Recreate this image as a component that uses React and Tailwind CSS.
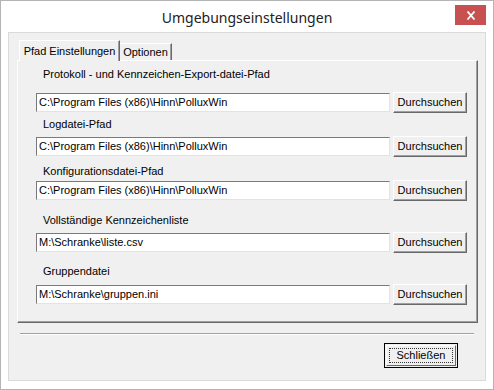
import React from 'react'

const font = { fontFamily: '"Liberation Sans", Arial, sans-serif' }

// sunken edit box
function PathField({ value }) {
  return (
    <div className="w-[354px] h-[19px] bg-white border-t border-l border-t-[#7a7a7a] border-l-[#7a7a7a] border-r border-b border-r-[#e3e3e3] border-b-[#e3e3e3] flex items-center pl-[2px] text-[11px] text-black leading-none overflow-hidden whitespace-nowrap">
      {value}
    </div>
  )
}

// raised push button
function WinButton({ children, w = 'w-[74px]' }) {
  return (
    <div className={`${w} h-[21px] bg-[#f0f0f0] border border-t-white border-l-white border-r-[#696969] border-b-[#696969] shadow-[inset_-1px_-1px_0_#a0a0a0] flex items-center justify-center text-[11px] text-black leading-none`}>
      {children}
    </div>
  )
}

function PathRow({ label, value, labelGap, fieldGap }) {
  return (
    <div className={labelGap}>
      <div className="pl-[7px] h-[13px] text-[11px] leading-[13px] text-black">{label}</div>
      <div className={`flex items-center gap-[3px] ${fieldGap}`}>
        <PathField value={value} />
        <WinButton>Durchsuchen</WinButton>
      </div>
    </div>
  )
}

export default function App() {
  const rows = [
    { label: 'Protokoll - und Kennzeichen-Export-datei-Pfad', value: 'C:\\Program Files (x86)\\Hinn\\PolluxWin', labelGap: 'mt-[7px]', fieldGap: 'mt-[11px]' },
    { label: 'Logdatei-Pfad', value: 'C:\\Program Files (x86)\\Hinn\\PolluxWin', labelGap: 'mt-[5px]', fieldGap: 'mt-[5px]' },
    { label: 'Konfigurationsdatei-Pfad', value: 'C:\\Program Files (x86)\\Hinn\\PolluxWin', labelGap: 'mt-[8px]', fieldGap: 'mt-[2px]' },
    { label: 'Vollständige Kennzeichenliste', value: 'M:\\Schranke\\liste.csv', labelGap: 'mt-[13px]', fieldGap: 'mt-[5px]' },
    { label: 'Gruppendatei', value: 'M:\\Schranke\\gruppen.ini', labelGap: 'mt-[12px]', fieldGap: 'mt-[6px]' },
  ]

  return (
    <div className="w-[494px] h-[390px] bg-white border border-[#b4b4b4] relative" style={font}>
      {/* title bar */}
      <div className="h-[31px] flex items-center justify-center">
        <span className="text-[14px] text-[#222] pt-[2px]" style={{ fontFamily: '"Noto Sans", "Open Sans", sans-serif' }}>
          Umgebungseinstellungen
        </span>
      </div>
      <div className="absolute top-[4px] right-[7px] w-[31px] h-[20px] bg-[#c75050] flex items-center justify-center">
        <svg width="10" height="9" viewBox="0 0 10 9">
          <path d="M1.5 0.5 L8.5 8.5 M8.5 0.5 L1.5 8.5" stroke="white" strokeWidth="1.8" />
        </svg>
      </div>

      {/* client area */}
      <div className="mx-[7px] h-[349px] bg-[#f0f0f0] border border-[#dadada] px-[8px]">
        {/* tabs */}
        <div className="mt-[7px] flex items-end pl-[2px] h-[21px] relative z-10">
          <div className="w-[101px] h-[21px] bg-[#f0f0f0] border-t border-l border-t-white border-l-white border-r border-r-[#696969] shadow-[inset_-1px_0_0_#a0a0a0] flex items-center justify-center text-[11px] text-black leading-none">
            Pfad Einstellungen
          </div>
          <div className="w-[52px] h-[17px] mb-px bg-[#f0f0f0] border-t border-t-white border-r border-r-[#696969] shadow-[inset_-1px_0_0_#a0a0a0] flex items-center justify-center text-[11px] text-black leading-none">
            Optionen
          </div>
        </div>

        {/* tab page */}
        <div className="-mt-px w-[461px] h-[263px] border border-t-white border-l-white border-r-[#696969] border-b-[#696969] shadow-[inset_-1px_-1px_0_#a0a0a0] pl-[18px]">
          {rows.map((r) => (
            <PathRow key={r.label} {...r} />
          ))}
        </div>

        {/* separator */}
        <div className="mt-[10px] ml-[3px] w-[454px] h-[2px] border-t border-t-[#a0a0a0] border-b border-b-white" />

        {/* close button */}
        <div className="mt-[8px] flex justify-end pr-[19px]">
          <div className="w-[74px] h-[25px] border border-black bg-[#f0f0f0] p-px">
            <div className="w-full h-full border border-t-white border-l-white border-r-[#696969] border-b-[#696969] flex items-center justify-center p-[2px]">
              <div className="w-full h-full border border-dotted border-[#333] flex items-center justify-center text-[11px] text-black leading-none">
                Schließen
              </div>
            </div>
          </div>
        </div>
      </div>
    </div>
  )
}
